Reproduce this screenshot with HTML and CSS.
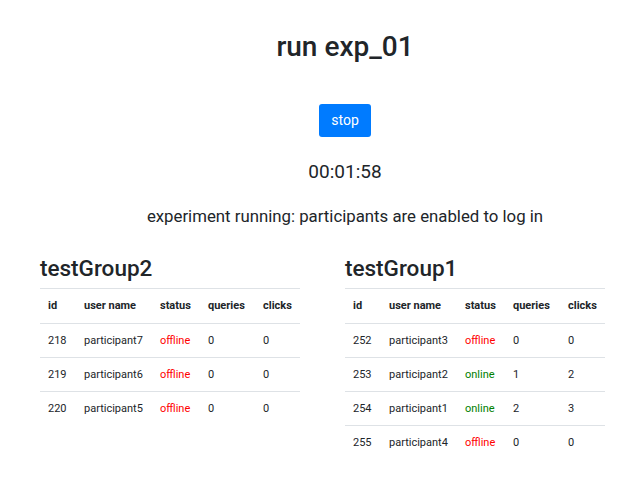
FILE: index.html
```html
<!DOCTYPE html>
<html>
<head>
<meta charset="utf-8">
<link rel="stylesheet" href="styles.css">
</head>
<body>
<div class="header">
  <h1 class="title">run exp_01</h1>
  <button class="btn">stop</button>
  <div class="timer">00:01:58</div>
  <p class="lead">experiment running: participants are enabled to log in</p>
</div>
<div class="groups">
  <section class="group">
    <h2 class="group-title">testGroup2</h2>
    <table class="tbl">
      <colgroup><col class="c-id"><col class="c-name"><col class="c-status"><col class="c-q"><col class="c-c"></colgroup>
      <thead><tr><th>id</th><th>user name</th><th>status</th><th>queries</th><th>clicks</th></tr></thead>
      <tbody>
        <tr><td>218</td><td>participant7</td><td class="off">offline</td><td>0</td><td>0</td></tr>
        <tr><td>219</td><td>participant6</td><td class="off">offline</td><td>0</td><td>0</td></tr>
        <tr><td>220</td><td>participant5</td><td class="off">offline</td><td>0</td><td>0</td></tr>
      </tbody>
    </table>
  </section>
  <section class="group">
    <h2 class="group-title">testGroup1</h2>
    <table class="tbl">
      <colgroup><col class="c-id"><col class="c-name"><col class="c-status"><col class="c-q"><col class="c-c"></colgroup>
      <thead><tr><th>id</th><th>user name</th><th>status</th><th>queries</th><th>clicks</th></tr></thead>
      <tbody>
        <tr><td>252</td><td>participant3</td><td class="off">offline</td><td>0</td><td>0</td></tr>
        <tr><td>253</td><td>participant2</td><td class="on">online</td><td>1</td><td>2</td></tr>
        <tr><td>254</td><td>participant1</td><td class="on">online</td><td>2</td><td>3</td></tr>
        <tr><td>255</td><td>participant4</td><td class="off">offline</td><td>0</td><td>0</td></tr>
      </tbody>
    </table>
  </section>
</div>
</body>
</html>
```
FILE: styles.css
```css
html, body {
  margin: 0;
  padding: 0;
  background: #fff;
}
body {
  font-family: Roboto, "Liberation Sans", sans-serif;
  color: #212529;
  font-size: 14px;
  width: 636px;
  height: 490px;
  overflow: hidden;
}
.header {
  display: flex;
  flex-direction: column;
  align-items: center;
  padding-left: 54px;
  padding-top: 29px;
}
.title {
  margin: 0;
  font-size: 28px;
  font-weight: 500;
  line-height: 36px;
}
.btn {
  margin-top: 39px;
  font-family: inherit;
  font-size: 14px;
  line-height: 21px;
  padding: 6px 12px;
  background: #007bff;
  color: #fff;
  border: none;
  border-radius: 3px;
}
.timer {
  margin-top: 21px;
  font-size: 19px;
  line-height: 28px;
}
.lead {
  margin: 18px 0 0;
  font-size: 16.8px;
  line-height: 24px;
}
.groups {
  display: flex;
  gap: 45px;
  padding-left: 40px;
  margin-top: 25px;
}
.group {
  width: 260px;
}
.group-title {
  margin: 0 0 5px;
  font-size: 22.5px;
  font-weight: 500;
  line-height: 30px;
}
.tbl {
  width: 260px;
  table-layout: fixed;
  border-collapse: collapse;
  font-size: 11px;
  line-height: 17px;
}
.c-id { width: 36px; }
.c-name { width: 76px; }
.c-status { width: 48px; }
.c-q { width: 55px; }
.c-c { width: 45px; }
.tbl th, .tbl td {
  text-align: left;
  padding: 8px;
  border-top: 1px solid #dee2e6;
  white-space: nowrap;
}
.tbl th {
  font-weight: 700;
  padding-bottom: 9px;
}
.off { color: #ff0000; }
.on { color: #008000; }
```
